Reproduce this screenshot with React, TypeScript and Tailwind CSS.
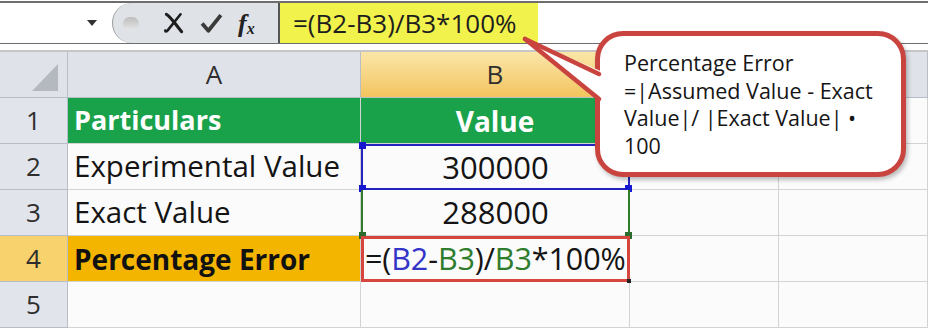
import React from "react"

const rows = [
  { n: "1", a: "Particulars", b: "Value", kind: "head" },
  { n: "2", a: "Experimental Value", b: "300000", kind: "exp" },
  { n: "3", a: "Exact Value", b: "288000", kind: "exact" },
  { n: "4", a: "Percentage Error", b: "", kind: "err" },
  { n: "5", a: "", b: "", kind: "empty" },
]

function Formula() {
  return (
    <>
      =(<span className="text-[#3434c8]">B2</span>-<span className="text-[#2d7d2d]">B3</span>)/
      <span className="text-[#2d7d2d]">B3</span>*100%
    </>
  )
}

function FormulaBar() {
  return (
    <div className="mt-px flex h-[43px] border-t-2 border-b border-[#6e6e6e]">
      <div className="flex w-[112px] items-center justify-end bg-white pr-[15px]">
        <div className="h-0 w-0 border-x-[5px] border-t-[6px] border-x-transparent border-t-[#333]" />
      </div>
      <div className="flex w-[166px] items-center rounded-l-[22px] border-l border-[#9c9c9c] bg-[#dfe2e7] pl-[10px]">
        <div className="h-[13px] w-[16px] rounded-[7px] bg-gradient-to-b from-[#bdbdbd] to-[#e6e6e6]" />
        <svg width="24" height="24" viewBox="0 0 22 22" className="ml-[23px]">
          <path d="M4 3c4 2 8 9 14 16" stroke="#1e1e1e" strokeWidth="2.8" fill="none" strokeLinecap="round" />
          <path d="M17 3L5 18c-1 1-2 1-2 0" stroke="#1e1e1e" strokeWidth="2.4" fill="none" strokeLinecap="round" />
        </svg>
        <svg width="25" height="23" viewBox="0 0 24 22" className="ml-[13px]">
          <path d="M3 11l6 7L21 3" stroke="#3a3a3a" strokeWidth="3.6" fill="none" strokeLinejoin="round" />
        </svg>
        <span className="ml-[14px] mt-[2px] font-['Liberation_Serif',serif] text-[26px] font-bold italic leading-none text-[#222]">
          f<span className="relative top-[2px] text-[16px]">x</span>
        </span>
      </div>
      <div className="flex w-[260px] items-center whitespace-nowrap border-l-2 border-[#555] bg-[#f2f24c] pl-[13px] text-[26px] text-[#1e1e1e]">
        =(B2-B3)/B3*100%
      </div>
      <div className="flex-1 bg-white" />
    </div>
  )
}

function Square({ pos, color }: { pos: string; color: string }) {
  return <div className={`absolute h-[7px] w-[7px] ${pos} ${color}`} />
}

export default function App() {
  const headCell = "flex items-center justify-center border-r border-b border-[#b7bec8] text-[26px] text-[#2e2e2e]"
  const cell = "flex items-center whitespace-nowrap border-r border-b border-[#d3d3d3]"
  return (
    <div className="relative h-[330px] w-[928px] overflow-hidden bg-white font-['Open_Sans',sans-serif]">
      <FormulaBar />
      <div className="h-[8px] border-b-2 border-[#c6c6c6]" />
      <div className="grid grid-cols-[68px_293px_269px_149px_1fr] grid-rows-[46px_46px_46px_46px_46px_46px]">
        <div className={`${headCell} relative bg-[#dfe3e9]`}>
          <svg width="26" height="27" viewBox="0 0 26 27" className="absolute bottom-[6px] right-[9px]">
            <polygon points="26,0 26,27 0,27" fill="#b4b8bf" />
          </svg>
        </div>
        <div className={`${headCell} bg-[#dfe3e9] text-[24px]`}>A</div>
        <div className={`${headCell} bg-gradient-to-b from-[#fbe6a8] to-[#f2c45c] text-[24px]`}>B</div>
        <div className={`${headCell} bg-[#dfe3e9]`} />
        <div className={`${headCell} bg-[#dfe3e9]`} />

        {rows.map((r) => (
          <React.Fragment key={r.n}>
            <div className={`${headCell} ${r.kind === "err" ? "bg-[#f8d26c]" : "bg-[#e1e5eb]"}`}>{r.n}</div>
            <div
              className={`${cell} pl-[6px] ${
                r.kind === "head"
                  ? "bg-[#1aa24b] text-[27px] font-bold text-white"
                  : r.kind === "err"
                    ? "bg-[#f4b500] text-[28px] font-bold text-[#111]"
                    : "bg-[#fbfbfb] text-[29.5px] text-[#141414]"
              }`}
            >
              {r.a}
            </div>
            {r.kind === "head" && (
              <div className={`${cell} justify-center bg-[#1aa24b] text-[28px] font-bold text-white`}>{r.b}</div>
            )}
            {r.kind === "exp" && (
              <div className="relative flex items-center justify-center border-2 border-[#2323c2] bg-[#fbfbfb] text-[31px] text-[#141414]">
                {r.b}
                <Square pos="-left-[4px] -top-[4px]" color="bg-[#1717d0]" />
                <Square pos="-left-[4px] -bottom-[4px]" color="bg-[#1717d0]" />
                <Square pos="-right-[4px] -bottom-[4px]" color="bg-[#1717d0]" />
              </div>
            )}
            {r.kind === "exact" && (
              <div className="relative flex items-center justify-center border-x-2 border-b border-x-[#2d7d2d] border-b-[#d3d3d3] bg-[#fbfbfb] text-[31px] text-[#141414]">
                {r.b}
                <Square pos="-left-[4px] -bottom-[4px]" color="bg-[#2d6b2d]" />
                <Square pos="-right-[4px] -bottom-[4px]" color="bg-[#2d6b2d]" />
              </div>
            )}
            {r.kind === "err" && (
              <div className="relative flex items-center whitespace-nowrap border-[3px] border-[#d7453f] bg-[#fbfbfb] pl-px text-[30.5px] tracking-[-0.1px] text-[#141414]">
                <Formula />
                <div className="absolute -bottom-[4px] -right-[4px] h-[4px] w-[4px] bg-[#222]" />
              </div>
            )}
            {r.kind === "empty" && <div className={`${cell} bg-[#fbfbfb]`} />}
            <div className={`${cell} bg-[#fbfbfb]`} />
            <div className={`${cell} bg-[#fbfbfb]`} />
          </React.Fragment>
        ))}
      </div>

      <div className="absolute left-[595px] top-[31px] h-[146px] w-[311px] rounded-[28px] border-[5px] border-[#c9443e] bg-white pl-[24px] pt-[13px] text-[21.5px] leading-[27.5px] whitespace-nowrap text-[#151515] shadow-[2px_3px_4px_rgba(0,0,0,0.25)]">
        Percentage Error
        <br />
        =|Assumed Value - Exact
        <br />
        Value|/ |Exact Value| •
        <br />
        100
      </div>
      <svg className="pointer-events-none absolute left-0 top-0" width="928" height="330">
        <polygon points="525,39 603,72 603,100" fill="#fff" />
        <line x1="525" y1="39" x2="599" y2="74" stroke="#c9443e" strokeWidth="4.5" strokeLinecap="round" />
        <line x1="525" y1="39" x2="599" y2="99" stroke="#c9443e" strokeWidth="4.5" strokeLinecap="round" />
      </svg>
    </div>
  )
}
